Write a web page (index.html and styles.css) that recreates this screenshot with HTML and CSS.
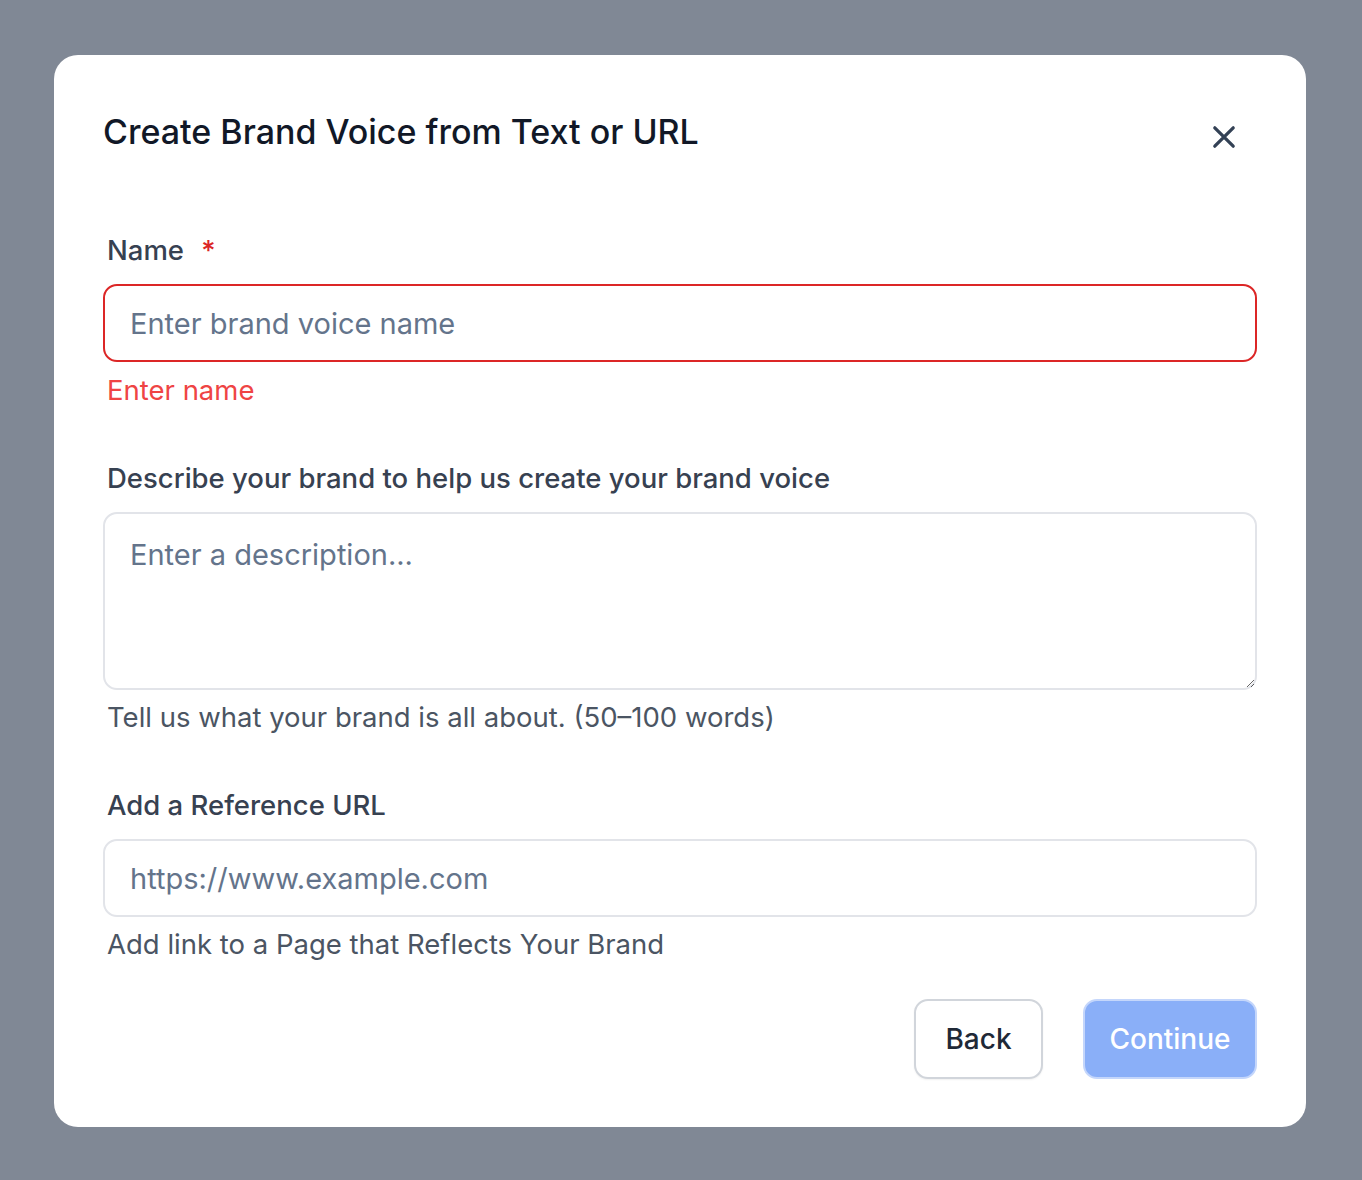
FILE: index.html
```html
<!DOCTYPE html>
<html lang="en">
<head>
  <meta charset="UTF-8">
  <meta name="viewport" content="width=device-width, initial-scale=1.0">
  <title>Create Brand Voice</title>
  <link rel="stylesheet" href="styles.css">
</head>
<body>
  <div class="overlay">
    <div class="modal">
      <div class="modal-header">
        <h1>Create Brand Voice from Text or URL</h1>
        <button class="close-btn" aria-label="Close">
          <svg width="26" height="26" viewBox="0 0 24 24" fill="none" stroke="currentColor" stroke-width="3" stroke-linecap="round">
            <path d="M3.5 3.5L20.5 20.5M20.5 3.5L3.5 20.5"/>
          </svg>
        </button>
      </div>

      <form class="modal-form">
        <div class="field">
          <label for="name">Name <span class="required">*</span></label>
          <input type="text" id="name" class="invalid" placeholder="Enter brand voice name">
          <div class="error-text">Enter name</div>
        </div>

        <div class="field">
          <label for="desc">Describe your brand to help us create your brand voice</label>
          <textarea id="desc" placeholder="Enter a description..."></textarea>
          <div class="hint">Tell us what your brand is all about. (50–100 words)</div>
        </div>

        <div class="field">
          <label for="url">Add a Reference URL</label>
          <input type="text" id="url" placeholder="https://www.example.com">
          <div class="hint">Add link to a Page that Reflects Your Brand</div>
        </div>

        <div class="actions">
          <button type="button" class="btn btn-back">Back</button>
          <button type="button" class="btn btn-continue">Continue</button>
        </div>
      </form>
    </div>
  </div>
</body>
</html>
```

FILE: styles.css
```css
body {
  font-family: Inter, "Noto Sans", sans-serif;
  margin: 0;
  background-color: #808895;
  color: #374151;
}
.overlay {
  min-height: 1180px;
  box-sizing: border-box;
  padding: 55px 56px 53px 54px;
}
.modal {
  background-color: #ffffff;
  border-radius: 24px;
  padding: 48px 49px 48px 49px;
  box-sizing: border-box;
  height: 1072px;
  display: flex;
  flex-direction: column;
}
.modal-header {
  display: flex;
  justify-content: space-between;
  align-items: flex-start;
}
.modal-header h1 {
  margin: 0;
  font-size: 34px;
  font-weight: 500;
  color: #111827;
  line-height: 56px;
  margin-top: 1px;
}
.close-btn {
  background: none;
  border: none;
  padding: 0;
  color: #334155;
  cursor: pointer;
  margin-top: 21px;
  margin-right: 20px;
}
.modal-form {
  margin-top: 70px;
  display: flex;
  flex-direction: column;
  flex-grow: 1;
}
.field {
  display: flex;
  flex-direction: column;
}
.field + .field {
  margin-top: 48px;
}
.field label {
  font-size: 27.5px;
  font-weight: 500;
  color: #374151;
  line-height: 40px;
  padding-left: 4px;
  margin-bottom: 14px;
}
.required {
  color: #dc2626;
  margin-left: 10px;
}
input, textarea {
  font-family: Inter, "Noto Sans", sans-serif;
  font-size: 29px;
  color: #111827;
  border: 2px solid #e2e4e9;
  border-radius: 14px;
  padding: 0 25px;
  box-sizing: border-box;
  width: 100%;
  background-color: #ffffff;
  outline: none;
}
input {
  height: 78px;
}
textarea {
  height: 178px;
  padding-top: 21px;
  resize: vertical;
  line-height: 40px;
}
input::placeholder, textarea::placeholder {
  color: #64748b;
}
input.invalid {
  border-color: #dc2626;
}
.error-text, .hint {
  font-size: 27.5px;
  line-height: 40px;
  padding-left: 4px;
  margin-top: 7px;
}
.error-text {
  color: #ef4444;
  margin-top: 8px;
}
.hint {
  color: #4b5563;
}
.actions {
  margin-top: auto;
  display: flex;
  justify-content: flex-end;
  gap: 40px;
}
.btn {
  font-family: Inter, "Noto Sans", sans-serif;
  font-size: 28px;
  font-weight: 500;
  height: 80px;
  border-radius: 14px;
  padding: 0;
  cursor: pointer;
}
.btn-back {
  width: 129px;
  background-color: #ffffff;
  border: 2px solid #d1d5db;
  color: #1f2937;
  box-shadow: 0 1px 2px rgba(0, 0, 0, 0.06);
}
.btn-continue {
  width: 174px;
  background-color: #8aaff8;
  border: 2px solid #c4d6fb;
  color: #ffffff;
}
```
